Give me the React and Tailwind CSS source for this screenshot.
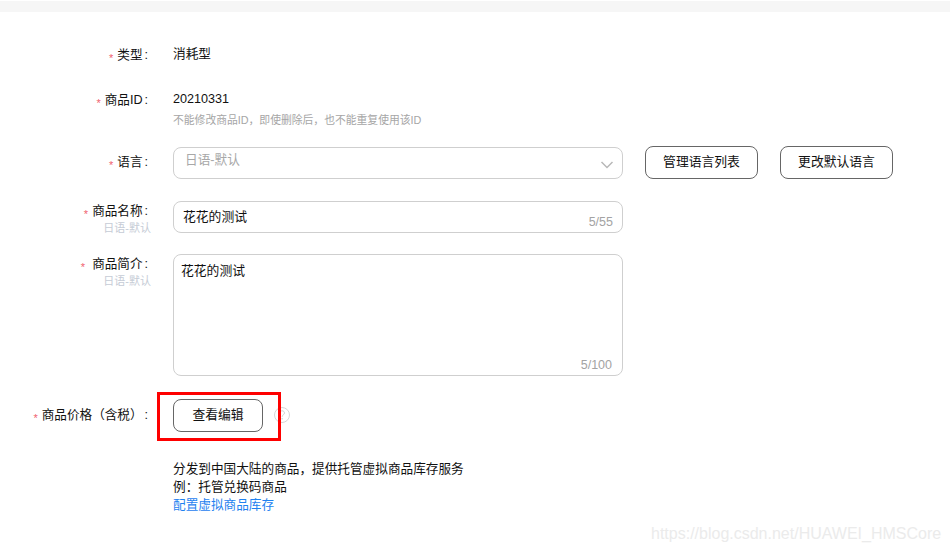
const FONT = "font-['Liberation_Sans','Noto_Sans_CJK_SC',sans-serif]";

const Star = ({ className = "mr-[4px]" }) => (
  <span className={`inline-block translate-y-[3px] text-[11px] leading-none text-[#f0626f] ${className}`}>*</span>
);

const Label = ({ text, sub, gap }) => (
  <div className="w-[148px] shrink-0 text-right">
    <div className="text-[12.6px] leading-[18px] text-[#111111]">
      <Star className={gap} />
      {text}
      <span className="ml-[2px]">:</span>
    </div>
    {sub && (
      <div className="mr-[-3px] text-[11px] leading-[16px] text-[#c6ccd6]">
        {sub}
      </div>
    )}
  </div>
);

const OutlineButton = ({ children, className = "" }) => (
  <button
    className={`h-[33px] rounded-[8px] border border-[#666666] bg-white pb-[2px] text-[12.8px] leading-[30px] text-[#111111] ${className}`}
  >
    {children}
  </button>
);

const App = () => {
  return (
    <div className={`relative h-[552px] w-[950px] overflow-hidden bg-white ${FONT}`}>
      <div className="mt-[1px] h-[11px] bg-[#f6f6f6]" />

      <div className="flex pt-[33px]">
        <div className="pt-[1px]">
          <Label text="类型" />
        </div>
        <div className="ml-[25px] text-[12.7px] leading-[18px] text-[#111111]">消耗型</div>
      </div>

      <div className="mt-[26px] flex">
        <div className="pt-[1px]">
          <Label text="商品ID" />
        </div>
        <div className="ml-[25px]">
          <div className="text-[12.6px] leading-[18px] text-[#111111]">20210331</div>
          <div className="mt-[4px] text-[10.8px] leading-[16px] text-[#a6a6a6]">
            不能修改商品ID，即使删除后，也不能重复使用该ID
          </div>
        </div>
      </div>

      <div className="mt-[18px] flex items-start">
        <div className="pt-[7px]">
          <Label text="语言" />
        </div>
        <div className="ml-[25px] mt-[1px] flex h-[32px] w-[450px] items-start justify-between rounded-[8px] border border-[#cfcfcf] pl-[11px] pr-[8px]">
          <span className="mt-[3px] text-[12.7px] leading-[18px] text-[#a8a8a8]">日语-默认</span>
          <svg width="14" height="8" viewBox="0 0 14 8" fill="none" className="mt-[13px]">
            <path d="M1.5 1 7 6.5 12.5 1" stroke="#b8b8b8" strokeWidth="1.5" />
          </svg>
        </div>
        <OutlineButton className="ml-[22px] w-[113px]">管理语言列表</OutlineButton>
        <OutlineButton className="ml-[22px] w-[113px]">更改默认语言</OutlineButton>
      </div>

      <div className="mt-[22px] flex items-start">
        <div className="pt-[1px]">
          <Label text="商品名称" sub="日语-默认" />
        </div>
        <div className="ml-[25px] flex h-[32px] w-[450px] items-start justify-between rounded-[8px] border border-[#cfcfcf] pl-[9px] pr-[9px]">
          <span className="mt-[6px] text-[12.8px] leading-[18px] text-[#111111]">花花的测试</span>
          <span className="mt-[12px] text-[12.5px] leading-[16px] text-[#a3a3a3]">5/55</span>
        </div>
      </div>

      <div className="mt-[18px] flex items-start">
        <div className="pt-[1px]">
          <Label text="商品简介" sub="日语-默认" gap="mr-[7px]" />
        </div>
        <div className="ml-[25px] flex h-[122px] w-[450px] flex-col justify-between rounded-[8px] border border-[#cfcfcf] pl-[7px] pr-[10px]">
          <span className="mt-[7px] text-[12.8px] leading-[18px] text-[#111111]">花花的测试</span>
          <span className="mb-[2px] self-end text-[12.5px] leading-[16px] text-[#a3a3a3]">5/100</span>
        </div>
      </div>

      <div className="mt-[23px] flex items-start">
        <div className="pt-[7px]">
          <Label text="商品价格（含税）" />
        </div>
        <OutlineButton className="ml-[25px] w-[90px]">查看编辑</OutlineButton>
        <svg width="16" height="16" viewBox="0 0 16 16" fill="none" className="ml-[11px] mt-[8px]">
          <circle cx="8" cy="8" r="7.5" stroke="#d6d6d6" />
          <path d="M5.6 6.2c0-1.4 1.1-2.4 2.5-2.4s2.4 1 2.4 2.2c0 1.8-2.4 1.8-2.4 3.8" stroke="#d0d0d0" />
          <circle cx="8.1" cy="11.8" r=".8" fill="#d0d0d0" />
        </svg>
      </div>

      <div className="ml-[173px] mt-[28px] text-[12.65px] leading-[18px] text-[#111111]">
        <div>分发到中国大陆的商品，提供托管虚拟商品库存服务</div>
        <div>例：托管兑换码商品</div>
        <div className="text-[#1f82f0]">配置虚拟商品库存</div>
      </div>

      <div className="pointer-events-none absolute left-[157px] top-[392px] h-[49px] w-[124px] border-[3px] border-[#fe0000]" />
      <div className="pointer-events-none absolute left-[651px] top-[525px] text-[16px] leading-[18px] text-[#ebebeb]">
        https://blog.csdn.net/HUAWEI_HMSCore
      </div>
    </div>
  );
};

export default App;
